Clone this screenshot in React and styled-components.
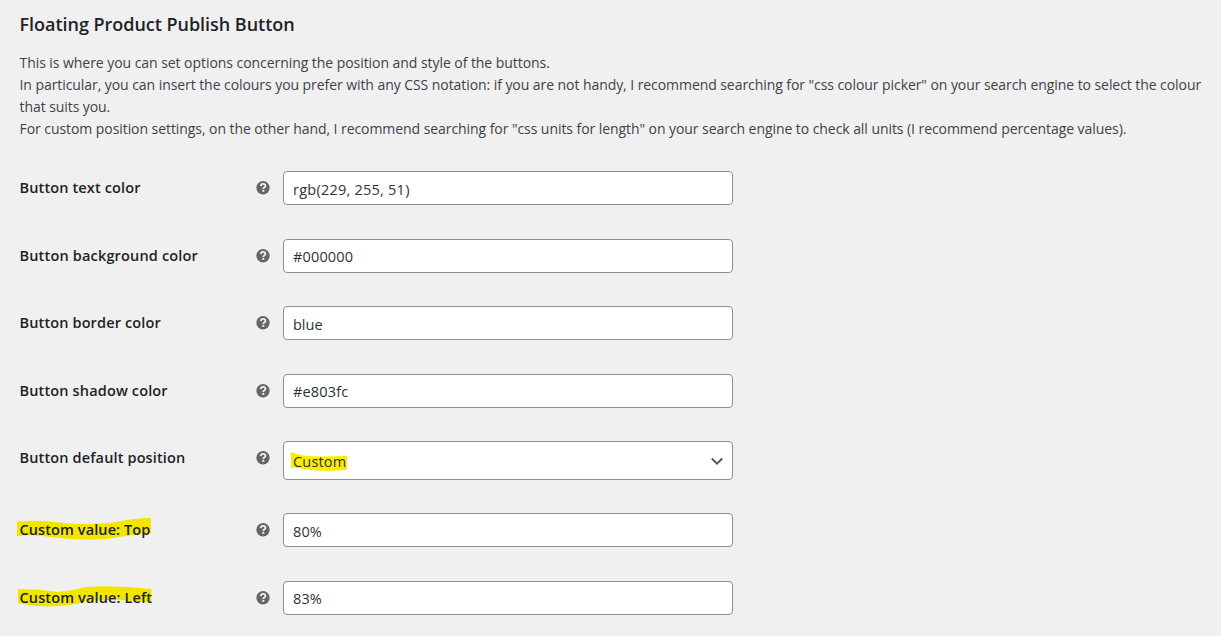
import React from "react";
import styled, { createGlobalStyle } from "styled-components";

const GlobalStyle = createGlobalStyle`
  *, *::before, *::after { box-sizing: border-box; }
  body {
    margin: 0;
    background: #f0f0f0;
    color: #3c434a;
    font: 14px/22px "Open Sans", "Noto Sans", sans-serif;
  }
`;

const Page = styled.main`
  height: 636px;
  padding: 12px 0 0 19.5px;
  overflow: hidden;
`;

const Title = styled.h2`
  margin: 0;
  color: #1d2327;
  font-size: 18px;
  font-weight: 600;
  line-height: 25px;
  letter-spacing: ${(p) => p.$track}px;
  white-space: nowrap;
`;

const Description = styled.div`
  padding-top: 15px;
  height: 119px;
`;

const Line = styled.p`
  margin: 0;
  white-space: nowrap;
  letter-spacing: ${(p) => p.$track}px;
`;

const Row = styled.div`
  display: grid;
  grid-template-columns: 236.5px 27px 450px;
  align-items: start;
  height: ${(p) => (p.$tall ? 72 : 67.5)}px;
  padding-top: 15px;
`;

const Label = styled.label`
  position: relative;
  justify-self: start;
  padding-top: 6px;
  color: #1d2327;
  font-size: 14.5px;
  font-weight: 600;
  white-space: nowrap;
  letter-spacing: ${(p) => p.$track}px;
`;

const Text = styled.span`
  position: relative;
`;

const HelpIcon = styled.svg`
  width: 14px;
  height: 14px;
  margin-top: 10px;
`;

const Field = styled.input`
  width: 450px;
  height: 34px;
  padding: 2.4px 9px 0;
  border: 1px solid #8c8f94;
  border-radius: 4px;
  background: #fff;
  color: #2c3338;
  font: inherit;
  font-size: 14.5px;
  letter-spacing: ${(p) => p.$track}px;
  outline: none;
`;

const Select = styled.div`
  display: flex;
  align-items: center;
  justify-content: space-between;
  height: 39px;
  padding: 2px 8px 0 9px;
  border: 1px solid #8c8f94;
  border-radius: 4px;
  background: #fff;
  color: #2c3338;
  font-size: 14.5px;
`;

const Value = styled.span`
  position: relative;
  letter-spacing: ${(p) => p.$track}px;
`;

const Chevron = styled.svg`
  width: 14px;
  height: 14px;
  margin-top: -1px;
`;

const Marker = styled.svg`
  position: absolute;
  left: ${(p) => p.$left}px;
  top: ${(p) => p.$top}px;
  overflow: visible;
`;

const rows = [
  { label: "Button text color", track: 0.13, value: "rgb(229, 255, 51)", vt: 0.24 },
  { label: "Button background color", track: 0.17, value: "#000000", vt: 0.15 },
  { label: "Button border color", track: 0.13, value: "blue", vt: 0 },
  { label: "Button shadow color", track: 0.15, value: "#e803fc", vt: 0.15 },
  { label: "Button default position", track: 0.14, value: "Custom", vt: 0.18, select: true },
  {
    label: "Custom value: Top", track: 0.1, value: "80%", vt: 0.1,
    mark: "M0 3.5Q16 2 33 3.5Q66 8 96 4.5Q118 0 134 0V15Q105 18 90 21Q62 23 33 19Q15 16 0 18.5Z",
    top: 5,
  },
  {
    label: "Custom value: Left", track: 0.13, value: "83%", vt: 0.1,
    mark: "M1 3Q22 3 40 6Q55 5 68 1Q100 -1 134.5 3V17Q105 12 72 15Q48 22 20 20Q10 19 1 17Z",
    top: 5,
  },
];

function Help() {
  return (
    <HelpIcon viewBox="0 0 14 14" aria-hidden="true">
      <circle cx="7" cy="6.7" r="6.7" fill="#666" />
      <path d="M4.8 5.1C4.9 3.6 5.8 2.9 7.1 2.9C8.5 2.9 9.4 3.7 9.4 4.9C9.4 6.4 7.3 6.4 7.3 8" fill="none" stroke="#f0f0f0" strokeWidth="1.8" />
      <rect x="6.3" y="8.9" width="2" height="1.9" fill="#f0f0f0" />
    </HelpIcon>
  );
}

function SettingRow({ item }) {
  return (
    <Row $tall={item.select}>
      <Label $track={item.track}>
        {item.mark && (
          <Marker width="134" height="22" $left={-2.5} $top={item.top}>
            <path d={item.mark} fill="#f2e600" />
          </Marker>
        )}
        <Text>{item.label}</Text>
      </Label>
      <Help />
      {item.select ? (
        <Select>
          <Value $track={item.vt}>
            <Marker width="57" height="19" $left={-2} $top={1}>
              <path d="M0 0Q12 5 32 4.5L56 4V18Q30 20 12 17Q5 15 0 16Z" fill="#ffea00" />
            </Marker>
            <Text>{item.value}</Text>
          </Value>
          <Chevron viewBox="0 0 14 14">
            <path d="M1.8 4.5L7 9.7L12.2 4.5" fill="none" stroke="#50575e" strokeWidth="2" />
          </Chevron>
        </Select>
      ) : (
        <Field $track={item.vt} defaultValue={item.value} spellCheck={false} aria-label={item.label} />
      )}
    </Row>
  );
}

export default function App() {
  return (
    <Page>
      <GlobalStyle />
      <Title $track={-0.03}>Floating Product Publish Button</Title>
      <Description>
        <Line $track={-0.055}>This is where you can set options concerning the position and style of the buttons.</Line>
        <Line $track={-0.066}>In particular, you can insert the colours you prefer with any CSS notation: if you are not handy, I recommend searching for "css colour picker" on your search engine to select the colour</Line>
        <Line $track={-0.07}>that suits you.</Line>
        <Line $track={-0.064}>For custom position settings, on the other hand, I recommend searching for "css units for length" on your search engine to check all units (I recommend percentage values).</Line>
      </Description>
      {rows.map((item) => (
        <SettingRow key={item.label} item={item} />
      ))}
    </Page>
  );
}
